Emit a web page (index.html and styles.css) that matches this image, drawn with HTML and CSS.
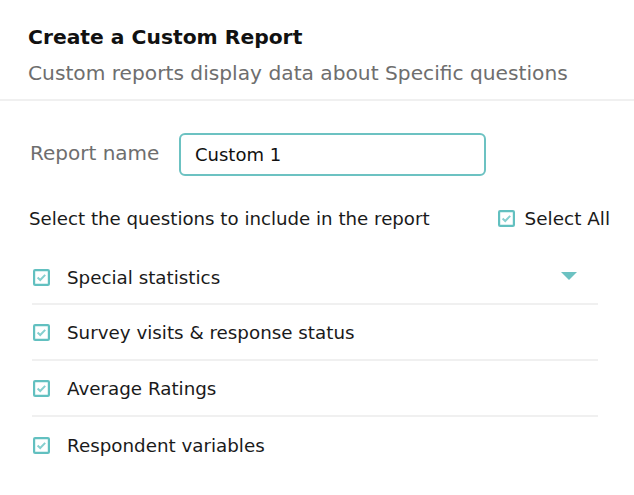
FILE: index.html
```html
<!DOCTYPE html>
<html>
<head>
<meta charset="utf-8">
<link rel="stylesheet" href="styles.css">
</head>
<body>
<div class="dialog">
  <header class="head">
    <h1 class="title">Create a Custom Report</h1>
    <p class="subtitle">Custom reports display data about Specific questions</p>
  </header>
  <section class="body">
    <div class="name-row">
      <label class="name-label">Report name</label>
      <div class="name-input">Custom 1</div>
    </div>
    <div class="select-row">
      <span class="select-text">Select the questions to include in the report</span>
      <span class="select-all"><span class="cb"><svg viewBox="0 0 17 17" width="17" height="17"><rect x="1.1" y="1.1" width="14.8" height="14.8" rx="1" fill="none" stroke="#62c0c0" stroke-width="2.2"/><path d="M4.6 8.6 L7.2 11 L12.2 5.9" fill="none" stroke="#86cfcf" stroke-width="2"/></svg></span>Select All</span>
    </div>
    <ul class="list">
      <li class="item"><span class="cb"><svg viewBox="0 0 17 17" width="17" height="17"><rect x="1.1" y="1.1" width="14.8" height="14.8" rx="1" fill="none" stroke="#62c0c0" stroke-width="2.2"/><path d="M4.6 8.6 L7.2 11 L12.2 5.9" fill="none" stroke="#86cfcf" stroke-width="2"/></svg></span><span class="item-text">Special statistics</span><span class="caret"></span></li>
      <li class="item"><span class="cb"><svg viewBox="0 0 17 17" width="17" height="17"><rect x="1.1" y="1.1" width="14.8" height="14.8" rx="1" fill="none" stroke="#62c0c0" stroke-width="2.2"/><path d="M4.6 8.6 L7.2 11 L12.2 5.9" fill="none" stroke="#86cfcf" stroke-width="2"/></svg></span><span class="item-text">Survey visits &amp; response status</span></li>
      <li class="item"><span class="cb"><svg viewBox="0 0 17 17" width="17" height="17"><rect x="1.1" y="1.1" width="14.8" height="14.8" rx="1" fill="none" stroke="#62c0c0" stroke-width="2.2"/><path d="M4.6 8.6 L7.2 11 L12.2 5.9" fill="none" stroke="#86cfcf" stroke-width="2"/></svg></span><span class="item-text">Average Ratings</span></li>
      <li class="item last"><span class="cb"><svg viewBox="0 0 17 17" width="17" height="17"><rect x="1.1" y="1.1" width="14.8" height="14.8" rx="1" fill="none" stroke="#62c0c0" stroke-width="2.2"/><path d="M4.6 8.6 L7.2 11 L12.2 5.9" fill="none" stroke="#86cfcf" stroke-width="2"/></svg></span><span class="item-text">Respondent variables</span></li>
    </ul>
  </section>
</div>
</body>
</html>
```

FILE: styles.css
```css
* { box-sizing: border-box; }
html, body { margin: 0; padding: 0; background: #fff; }
body { font-family: "DejaVu Sans", Inter, sans-serif; color: #1a1a1a; width: 634px; height: 495px; overflow: hidden; }
.dialog { width: 634px; }
.head { padding: 23px 28px 0 28px; height: 101px; border-bottom: 2px solid #f0f0f0; }
.title { margin: 0; font-size: 20.3px; font-weight: 700; line-height: 28px; color: #111; }
.subtitle { margin: 9px 0 0 0; font-size: 20.2px; line-height: 26px; color: #6e6e6e; font-weight: 400; }
.body { padding: 32px 36px 0 30px; }
.name-row { display: flex; align-items: center; height: 43px; }
.name-label { width: 149px; font-size: 20px; color: #6e6e6e; line-height: 24px; margin-top: -4px; }
.name-input { width: 307px; height: 43px; border: 2px solid #6cc2c2; border-radius: 6px; padding: 0 14px; display: flex; align-items: center; font-size: 18px; color: #111; }
.select-row { display: flex; align-items: center; justify-content: space-between; margin-top: 30px; height: 24px; margin-right: -12px; }
.select-text { font-size: 18.2px; color: #1a1a1a; margin-left: -1px; }
.select-all { display: flex; align-items: center; font-size: 18.4px; color: #1a1a1a; }
.select-all .cb { margin-right: 10px; }
.cb { display: inline-flex; width: 17px; height: 17px; flex: none; }
.list { list-style: none; margin: 22px 0 0 2px; padding: 0; }
.item { display: flex; align-items: center; height: 56px; border-bottom: 2px solid #f0f0f0; position: relative; padding-left: 1px; }
.item.last { border-bottom: none; }
.item:first-child { height: 53px; }
.item .cb { margin-right: 17px; }
.item-text { font-size: 18.3px; color: #1a1a1a; }
.caret { position: absolute; right: 21px; top: 20px; width: 0; height: 0; border-left: 8px solid transparent; border-right: 8px solid transparent; border-top: 8px solid #6cc2c2; }
```
